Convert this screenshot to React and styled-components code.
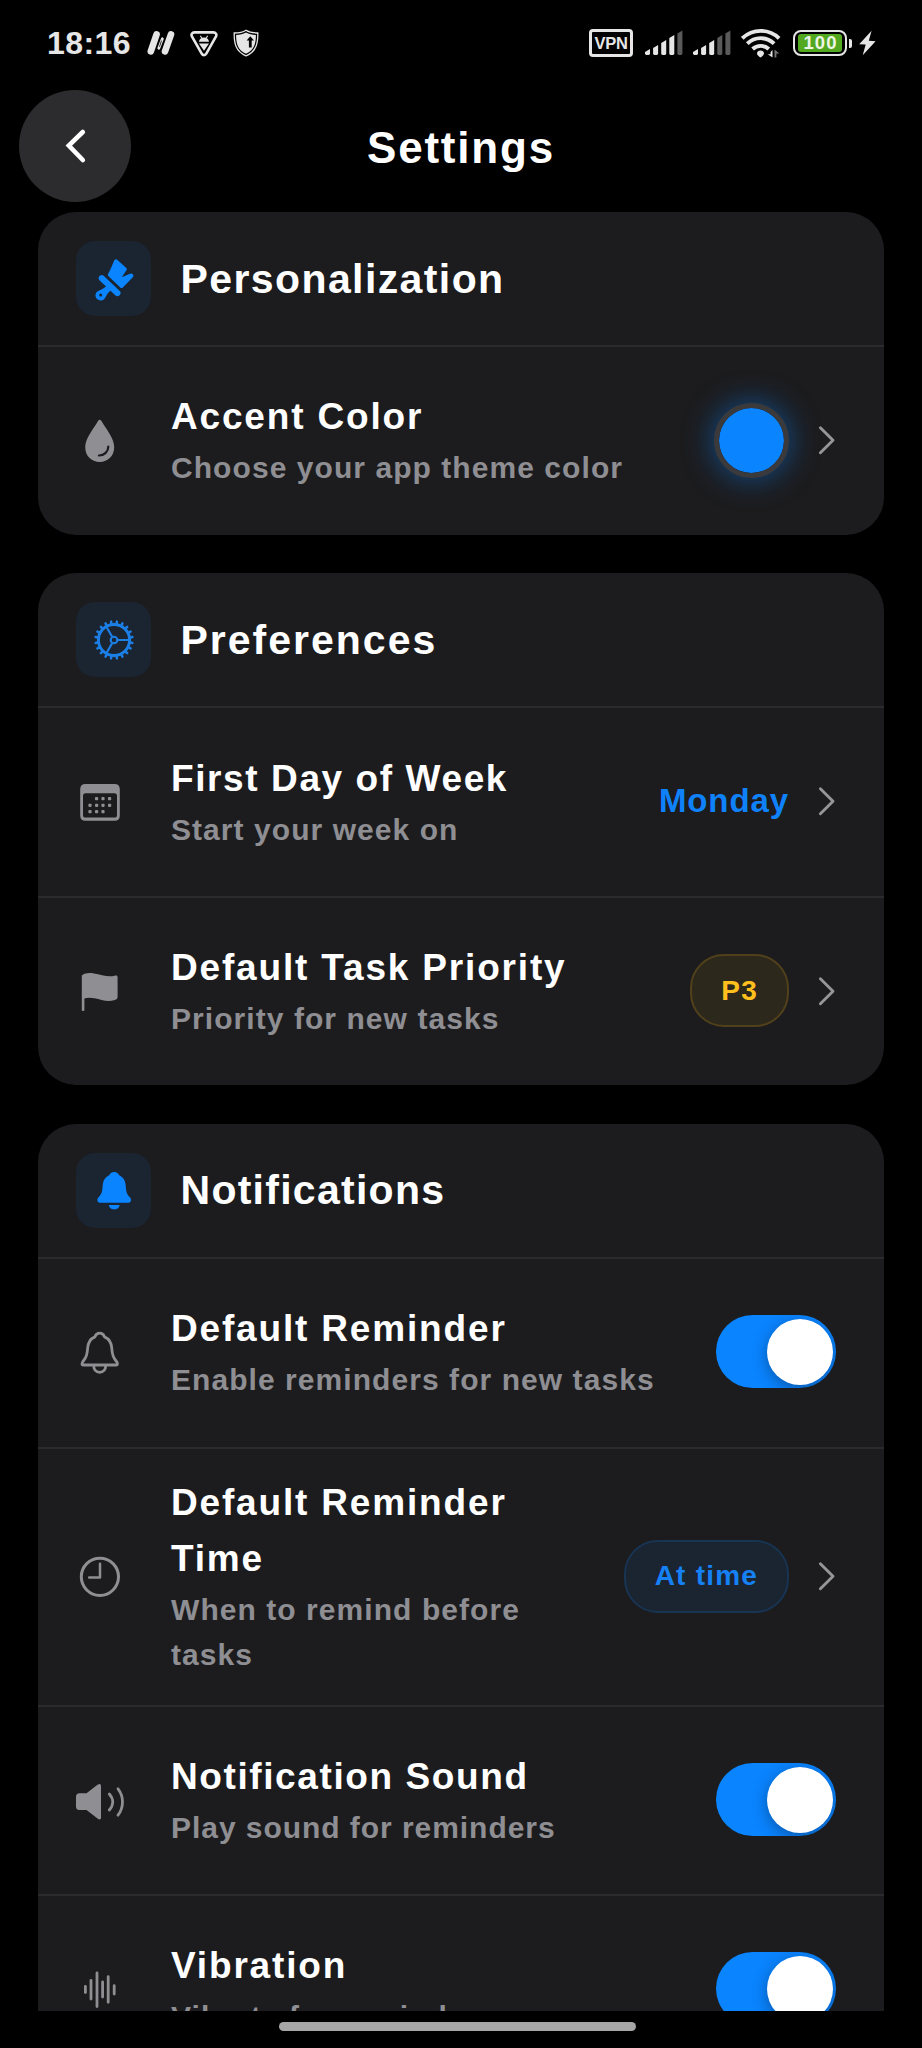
import React from "react";
import styled, { createGlobalStyle, css } from "styled-components";

const ACCENT = "#0a84ff";
const CARD = "#1c1c1e";
const MUTED = "#8e8e93";
const LINE = "#2b2b2d";
const STATUS = "#e6e6e6";

const GlobalStyle = createGlobalStyle`
  * { box-sizing: border-box; }
  html, body { margin: 0; background: #000; }
  body {
    font-family: "Liberation Sans", Arial, sans-serif;
    font-weight: 700;
    color: #fff;
    font-variant-ligatures: none;
  }
  svg { display: block; flex: none; }
`;

const Screen = styled.div`
  width: 922px;
  height: 2048px;
  background: #000;
  display: flex;
  flex-direction: column;
  overflow: hidden;
`;

const StatusBar = styled.div`
  height: 86px;
  flex: none;
  padding: 0 46px 0 47px;
  display: flex;
  align-items: center;
  justify-content: space-between;
`;

const StatusGroup = styled.div`
  display: flex;
  align-items: center;
`;

const StatusIcons = styled.div`
  display: flex;
  align-items: center;
  gap: ${(p) => p.$gap}px;
`;

const Clock = styled.span`
  font-size: 32px;
  line-height: 36px;
  letter-spacing: 0.4px;
  color: ${STATUS};
  margin-right: 16px;
`;

const VpnBadge = styled.span`
  width: 44px;
  height: 28px;
  border: 3px solid ${STATUS};
  border-radius: 4px;
  color: ${STATUS};
  font-size: 16.5px;
  line-height: 22px;
  letter-spacing: -0.3px;
  text-align: center;
  margin-right: 12px;
`;

const Battery = styled.span`
  width: 54px;
  height: 26px;
  border: 2.5px solid ${STATUS};
  border-radius: 8px;
  padding: 2px 3px;
  margin-left: 12px;
`;

const BatteryFill = styled.span`
  display: block;
  height: 100%;
  border-radius: 3px;
  background: #52a91f;
  color: #eef5e6;
  font-size: 18.5px;
  line-height: 18px;
  letter-spacing: 1px;
  text-indent: 1px;
  text-align: center;
`;

const BatteryNub = styled.span`
  width: 3px;
  height: 9px;
  border-radius: 0 2px 2px 0;
  background: ${STATUS};
  margin: 0 7px 0 2px;
`;

const Header = styled.header`
  height: 119px;
  flex: none;
  padding: 0 19px;
  display: grid;
  grid-template-columns: 112px 1fr 112px;
  align-items: center;
`;

const BackButton = styled.button`
  width: 112px;
  height: 112px;
  border: 0;
  border-radius: 50%;
  background: #2c2c2e;
  padding: 0;
  display: flex;
  align-items: center;
  justify-content: center;
`;

const PageTitle = styled.h1`
  margin: 0;
  padding-top: 4px;
  font-size: 44px;
  line-height: 56px;
  letter-spacing: 1.8px;
  text-align: center;
`;

const Scroll = styled.main`
  height: 1806px;
  flex: none;
  overflow: hidden;
  padding: 7px 38px 0;
  display: flex;
  flex-direction: column;
  gap: 38.4px;
`;

const Card = styled.section`
  flex: none;
  background: ${CARD};
  border-radius: 38px;
  overflow: hidden;
`;

const CardHeader = styled.div`
  height: 135px;
  border-bottom: 2px solid ${LINE};
  padding: 0 38px;
  display: flex;
  align-items: center;
  gap: 29.5px;
`;

const IconTile = styled.span`
  width: 75px;
  height: 75px;
  border-radius: 19px;
  background: #1b2431;
  display: flex;
  align-items: center;
  justify-content: center;
`;

const CardTitle = styled.h2`
  margin: 0;
  font-size: 41px;
  line-height: 50px;
  letter-spacing: ${(p) => p.$track}px;
`;

const Row = styled.div`
  min-height: 188px;
  padding: 26px 48px 28px 38px;
  display: flex;
  align-items: center;
  & + & { border-top: 2px solid ${LINE}; min-height: 189px; }
`;

const RowText = styled.div`
  flex: 1;
  min-width: 0;
  margin-left: 47px;
  margin-right: 24px;
`;

const RowTitle = styled.div`
  font-size: 37px;
  line-height: 56px;
  letter-spacing: ${(p) => p.$track}px;
`;

const RowSub = styled.div`
  font-size: 30px;
  line-height: 45.3px;
  color: ${MUTED};
  letter-spacing: ${(p) => p.$track}px;
  white-space: ${(p) => (p.$wrap ? "normal" : "nowrap")};
`;

const Trailing = styled.div`
  display: flex;
  align-items: center;
  gap: 28px;
`;

const ValueText = styled.span`
  color: #0f82fa;
  font-size: 33px;
  line-height: 50px;
  letter-spacing: 0.9px;
`;

const tones = {
  amber: css`
    color: #ffc01e;
    background: #2d281c;
    border-color: #51411b;
  `,
  blue: css`
    color: #1581f5;
    background: #1b2431;
    border-color: #183453;
  `,
};

const Pill = styled.span`
  height: 73px;
  padding: 0 ${(p) => p.$pad}px;
  border: 2px solid;
  border-radius: 34px;
  font-size: 28px;
  letter-spacing: 1.2px;
  display: flex;
  align-items: center;
  white-space: nowrap;
  ${(p) => tones[p.$tone]}
`;

const Swatch = styled.span`
  width: 75px;
  height: 75px;
  border-radius: 50%;
  border: 5px solid #3a3a3c;
  background: ${ACCENT};
  background-clip: padding-box;
  box-shadow: 0 0 30px rgba(10, 132, 255, 0.5);
`;

const Switch = styled.span`
  width: 120px;
  height: 73px;
  border-radius: 37px;
  background: ${ACCENT};
  padding: 3.5px;
  display: flex;
  justify-content: flex-end;
  overflow: hidden;
`;

const Knob = styled.span`
  width: 66px;
  height: 66px;
  border-radius: 50%;
  background: #fff;
  box-shadow: 0 4px 15px rgba(0, 0, 0, 0.34);
`;

const HomeArea = styled.div`
  flex: 1;
  padding-top: 11px;
  display: flex;
  justify-content: center;
`;

const HomeBar = styled.div`
  width: 357px;
  height: 9px;
  border-radius: 5px;
  background: #a6a6a6;
  margin-right: 7px;
`;

/* Status bar drawings */

const SlashesIcon = () => (
  <svg width="28" height="26" viewBox="0 0 28 26" stroke={STATUS} strokeLinecap="round">
    <path d="M3.8 21.4 9.6 4.4M18 21.4 24 4.4" strokeWidth="6.6" />
    <path d="M11.8 18.2 15.4 8.8" strokeWidth="2.8" />
    <path d="M12.6 16.4 14.4 11" stroke="#000" strokeWidth="0.8" />
  </svg>
);

const TriangleIcon = () => (
  <svg width="28" height="27" viewBox="0 0 28 27">
    <path d="M4.4 2.4H23.4C25.7 2.4 27 4.4 26 6.4L16.3 23.6C15.2 25.6 12.8 25.6 11.7 23.6L1.9 6.4C.9 4.4 2.1 2.4 4.4 2.4Z" fill="none" stroke={STATUS} strokeWidth="2.6" />
    <path d="M9 11.8C9.3 9.2 10.9 7.6 14 7.6S18.700 9.200 19 11.800ZM9 13.400H19L14 20.800Z" fill={STATUS} />
    <path d="m10.400 5.800 1.400 2.400M17.600 5.800l-1.400 2.400" stroke={STATUS} strokeWidth="1.100" />
  </svg>
);

const ShieldIcon = () => (
  <svg width="26" height="28" viewBox="0 0 26 28">
    <path d="M13 1.200C16 3.200 20 4 24.800 4C25 14 23.500 22.500 13 26.800C2.500 22.500 1 14 1.200 4C6 4 10 3.200 13 1.200Z" fill="none" stroke={STATUS} strokeWidth="1.300" />
    <path d="M13 3.600C16 5.200 19 5.900 22.900 6C22.900 14.500 21.200 21.200 13 24.700C4.800 21.200 3.100 14.500 3.100 6C7 5.900 10 5.200 13 3.600Z" fill={STATUS} />
    <path d="M17.300 7.300 21 11.600H18.700V18.400H15.900V11.600H13.600Z" fill="#000" />
  </svg>
);

const SignalIcon = ({ level }) => (
  <svg width="38" height="26" viewBox="0 0 38 26">
    {[6, 10, 15, 20, 24.5].map((h, i) => (
      <path
        key={h}
        d={`M${i * 8.1} ${25 - h + 3}L${i * 8.1 + 5} ${25 - h}V23.600Q${i * 8.1 + 5} 25 ${i * 8.1 + 3.6} 25H${i * 8.1 + 1.4}Q${i * 8.1} 25 ${i * 8.1} 23.600Z`}
        fill={i < level ? STATUS : "#5a5a5a"}
      />
    ))}
  </svg>
);

const WifiIcon = () => (
  <svg width="40" height="30" viewBox="0 0 40 30">
    <g fill="none" stroke={STATUS} strokeWidth="3.900">
      <path d="M1.300 10.300A26.500 26.500 0 0 1 38.100 10.300" />
      <path d="M6.300 15.700A19 19 0 0 1 33.100 15.700" />
      <path d="M11.600 21A12 12 0 0 1 27.800 21" />
    </g>
    <path d="M19.500 22.500C21.500 22.500 23 23.800 23 25.400C23 27 21 28.500 19.500 29.600C18 28.500 16 27 16 25.400C16 23.800 17.500 22.500 19.500 22.500Z" fill={STATUS} />
    <path d="M31.500 22V29.600L26.700 26.200H29.600V24Z" fill={STATUS} />
    <path d="M33.500 29.500V21.600L38.400 25.600H35.400V29.500Z" fill="#777" />
  </svg>
);

const BoltIcon = () => (
  <svg width="17" height="26" viewBox="0 0 17 26">
    <path d="M12.600.8.200 14.200 6.700 14.600 3.700 25.200 16.600 11.200 9.800 10.800Z" fill={STATUS} />
  </svg>
);

/* Section and row drawings */

const BackIcon = () => (
  <svg width="30" height="40" viewBox="0 0 30 40">
    <path d="M22.800 6 8.800 19.500 22.800 34" fill="none" stroke="#fff" strokeWidth="4.600" strokeLinecap="round" strokeLinejoin="miter" />
  </svg>
);

const Chevron = () => (
  <svg width="19" height="30" viewBox="0 0 19 30">
    <path d="M3.400 2.700 16 15.200 3.400 27.700" fill="none" stroke="#95959a" strokeWidth="2.900" strokeLinecap="round" strokeLinejoin="round" />
  </svg>
);

const BrushIcon = () => (
  <svg width="46" height="46" viewBox="0 0 46 46" fill={ACCENT}>
    <path d="M23.200 4.400C23.900 3 25.400 2.900 26.500 4L35.300 11.900C36 12.500 36 13.300 35.600 14L30.800 21.300L38.200 18.100C39.700 16.900 41.300 17.300 42 18.500C42.700 19.700 42.500 20.700 41.500 21.600L31.800 31.400C31 32.200 30 32.100 29.300 31.400L17.500 20.300C16.700 19.500 16.700 18.700 17.200 17.800C19.500 13.500 21.400 8.600 23.200 4.400Z" />
    <path d="M10.800 22.200 26.400 37" stroke={ACCENT} strokeWidth="6.200" strokeLinecap="round" />
    <path fillRule="evenodd" d="M9 24 20 34.300C18 36 16 38 14.900 40.500C13.600 43.800 11.500 44.700 9.300 44.400C6.300 44 4.200 41.700 4.500 38.800C4.900 35.800 7.300 34.700 10.500 33.500C13 32.500 14.800 31 15.700 29.600ZM9.700 37.500A1.500 1.500 0 1 0 9.700 40.500A1.500 1.500 0 1 0 9.700 37.500Z" />
  </svg>
);

const teeth = Array.from({ length: 20 }, (_, i) => i * 18 + 9);

const GearIcon = () => (
  <svg width="46" height="46" viewBox="-23 -23 46 46" fill="none" stroke="#1c7fe6">
    <circle r="15.600" strokeWidth="3" />
    <circle r="3.300" strokeWidth="2.100" />
    {[0, 120, 240].map((a) => (
      <path key={a} d="M4 0H15" strokeWidth="2.200" transform={`rotate(${a})`} />
    ))}
    {teeth.map((a) => (
      <path key={a} d="M16.500 0H18.600" strokeWidth="2.500" strokeLinecap="round" transform={`rotate(${a})`} />
    ))}
  </svg>
);

const BellFillIcon = () => (
  <svg width="46" height="46" viewBox="0 0 46 46" fill={ACCENT}>
    <path d="M23.200 5C20.700 5 18.900 6.300 18.200 8.300C13.400 10.400 11.900 14.500 11.600 19.500C11.300 24.500 10.500 27 8.300 29.500C6.800 31 6.400 31.700 6.400 33C6.400 34.700 7.400 35.700 9 35.700H37.400C39 35.700 40 34.700 40 33C40 31.700 39.600 31 38.100 29.500C35.900 27 35.100 24.500 34.800 19.500C34.500 14.500 33 10.400 28.200 8.300C27.500 6.300 25.700 5 23.200 5Z" />
    <path d="M17.800 38H28.600C28.400 40.500 26 42.400 23.200 42.400S18 40.500 17.800 38Z" />
  </svg>
);

const RowSvg = ({ children, ...rest }) => (
  <svg width="48" height="48" viewBox="0 0 48 48" {...rest}>
    {children}
  </svg>
);

const DropIcon = () => (
  <RowSvg>
    <path d="M23.700 3.700C25 3.700 25.500 5 26.500 6.800C32 15.500 38.200 23 38.200 31.300C38.200 39.800 32 46 23.700 46S9.200 39.800 9.200 31.300C9.200 23 15.500 15.500 21 6.800C22 5 22.500 3.700 23.700 3.700Z" fill={MUTED} />
    <path d="M32.300 30.500C32.300 35.500 28.500 39.500 22.900 39.500" fill="none" stroke={CARD} strokeWidth="2.200" strokeLinecap="round" />
  </RowSvg>
);

const CalendarIcon = () => (
  <RowSvg fill={MUTED}>
    <path fillRule="evenodd" d="M9.500 7H38.500Q43.800 7 43.800 12.300V38.400Q43.800 43.700 38.500 43.700H9.500Q4.200 43.700 4.200 38.400V12.300Q4.200 7 9.500 7ZM9.500 16.200Q7 16.200 7 19V38Q7 40.600 9.500 40.600H38.500Q41 40.600 41 38V19Q41 16.200 38.500 16.200Z" />
    {[[20.6, 21.7], [27, 21.7], [33.6, 21.7], [14, 28.3], [20.6, 28.3], [27, 28.3], [33.6, 28.3], [14, 34.7], [20.6, 34.7], [27, 34.7]].map(([x, y]) => (
      <rect key={`${x}-${y}`} x={x - 1.6} y={y - 1.6} width="3.200" height="3.200" rx="0.800" />
    ))}
  </RowSvg>
);

const FlagIcon = () => (
  <RowSvg fill={MUTED}>
    <path d="M5.800 8.500C9 6 13 5.600 18 6.400C25 7.500 32 10.500 38.500 8.700C40.500 8.200 41.600 8.600 41.600 10.500V30C41.600 32 40 32.800 38 33.300C31 35.500 25 32.500 18.500 31.200C14.500 30.500 11 30.500 8.400 31.500V43C8.400 44.400 5.800 44.400 5.800 43Z" />
  </RowSvg>
);

const BellIcon = () => (
  <RowSvg fill="none" stroke={MUTED} strokeWidth="2.800" strokeLinejoin="round">
    <path d="M23.700 5.200C21.400 5.200 19.700 6.500 18.900 8.900C14 11 11.900 15 11.600 20.500C11.300 26 10.300 29.300 8 32C6.500 33.700 6 34.600 6 35.800Q6 37 7.200 37H40.200Q41.400 37 41.400 35.800C41.400 34.600 40.900 33.700 39.400 32C37.100 29.300 36.100 26 35.800 20.500C35.500 15 33.400 11 28.500 8.900C27.700 6.500 26 5.200 23.700 5.200Z" />
    <path d="M17.700 37.500C17.700 41.500 20 44.300 23.700 44.300S29.700 41.500 29.700 37.500" />
  </RowSvg>
);

const ClockIcon = () => (
  <RowSvg fill="none" stroke={MUTED} strokeLinecap="round" strokeLinejoin="round">
    <circle cx="23.900" cy="24.800" r="18.600" strokeWidth="3" />
    <path d="M24 11.800V25.600H13.200" strokeWidth="2.500" />
  </RowSvg>
);

const SpeakerIcon = () => (
  <RowSvg fill={MUTED} overflow="visible">
    <path d="M3.500 17.300H10.500L21.500 8.800Q25 6.500 25 10V41.500Q25 44.800 21.500 42.400L10.500 34H3.500Q0 34 0 30.500V20.800Q0 17.300 3.500 17.300Z" />
    <path d="M33.300 18C37.800 23 37.800 29 33.300 34M42 12.800C48 20.500 48 31.500 42 39.200" fill="none" stroke={MUTED} strokeWidth="2.800" strokeLinecap="round" />
  </RowSvg>
);

const VibrationIcon = () => (
  <RowSvg stroke={MUTED} strokeWidth="2.800" strokeLinecap="round">
    <path d="M9.400 21.500V27.500M15 15.300V34M21 8V41.500M26.600 17V32M32.200 11.700V37.300M38.200 20.700V29" />
  </RowSvg>
);

const SettingRow = ({ icon, title, sub, track = 1.83, subTrack = 1.06, wrap, children }) => (
  <Row>
    {icon}
    <RowText>
      <RowTitle $track={track}>{title}</RowTitle>
      <RowSub $track={subTrack} $wrap={wrap}>{sub}</RowSub>
    </RowText>
    <Trailing>{children}</Trailing>
  </Row>
);

const Section = ({ icon, title, track, children }) => (
  <Card>
    <CardHeader>
      <IconTile>{icon}</IconTile>
      <CardTitle $track={track}>{title}</CardTitle>
    </CardHeader>
    {children}
  </Card>
);

const Toggle = () => (
  <Switch role="switch" aria-checked="true">
    <Knob />
  </Switch>
);

export default function App() {
  return (
    <>
      <GlobalStyle />
      <Screen>
        <StatusBar>
          <StatusGroup>
            <Clock>18:16</Clock>
            <StatusIcons $gap={15}>
              <SlashesIcon />
              <TriangleIcon />
              <ShieldIcon />
            </StatusIcons>
          </StatusGroup>
          <StatusGroup>
            <VpnBadge>VPN</VpnBadge>
            <StatusIcons $gap={10}>
              <SignalIcon level={4} />
              <SignalIcon level={3} />
              <WifiIcon />
            </StatusIcons>
            <Battery>
              <BatteryFill>100</BatteryFill>
            </Battery>
            <BatteryNub />
            <BoltIcon />
          </StatusGroup>
        </StatusBar>
        <Header>
          <BackButton aria-label="Back">
            <BackIcon />
          </BackButton>
          <PageTitle>Settings</PageTitle>
        </Header>
        <Scroll>
          <Section icon={<BrushIcon />} title="Personalization" track={1.4}>
            <SettingRow icon={<DropIcon />} title="Accent Color" sub="Choose your app theme color">
              <Swatch />
              <Chevron />
            </SettingRow>
          </Section>
          <Section icon={<GearIcon />} title="Preferences" track={2}>
            <SettingRow icon={<CalendarIcon />} title="First Day of Week" sub="Start your week on" track={1.6}>
              <ValueText>Monday</ValueText>
              <Chevron />
            </SettingRow>
            <SettingRow icon={<FlagIcon />} title="Default Task Priority" sub="Priority for new tasks">
              <Pill $tone="amber" $pad={29}>P3</Pill>
              <Chevron />
            </SettingRow>
          </Section>
          <Section icon={<BellFillIcon />} title="Notifications" track={1.27}>
            <SettingRow icon={<BellIcon />} title="Default Reminder" sub="Enable reminders for new tasks">
              <Toggle />
            </SettingRow>
            <SettingRow icon={<ClockIcon />} title="Default Reminder Time" sub="When to remind before tasks" wrap>
              <Pill $tone="blue" $pad={29}>At time</Pill>
              <Chevron />
            </SettingRow>
            <SettingRow icon={<SpeakerIcon />} title="Notification Sound" sub="Play sound for reminders" track={1.6} subTrack={0.95}>
              <Toggle />
            </SettingRow>
            <SettingRow icon={<VibrationIcon />} title="Vibration" sub="Vibrate for reminders">
              <Toggle />
            </SettingRow>
          </Section>
        </Scroll>
        <HomeArea>
          <HomeBar />
        </HomeArea>
      </Screen>
    </>
  );
}
